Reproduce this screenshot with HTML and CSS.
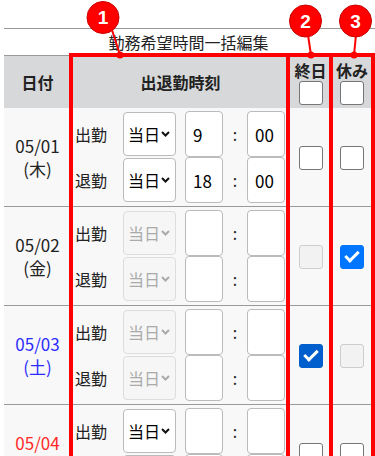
FILE: index.html
```html
<!DOCTYPE html>
<html lang="ja">
<head>
    <meta charset="UTF-8">
    <meta name="viewport" content="width=device-width, initial-scale=1.0">
    <title>勤務希望時間一括編集</title>
    <link rel="stylesheet" href="styles.css">
</head>
<body>
    <div class="sheet">
        <div class="caption">勤務希望時間一括編集</div>
        <table class="shift-table">
            <colgroup>
                <col class="w-date">
                <col class="w-time">
                <col class="w-allday">
                <col class="w-off">
            </colgroup>
            <thead>
                <tr>
                    <th>日付</th>
                    <th>出退勤時刻</th>
                    <th class="head-check">終日<input type="checkbox" class="check"></th>
                    <th class="head-check">休み<input type="checkbox" class="check"></th>
                </tr>
            </thead>
            <tbody>
                <tr>
                    <td class="date">05/01<br>(木)</td>
                    <td class="times">
                        <div class="time-row">
                            <span class="label">出勤</span>
                            <span class="select-wrap">
                                <select class="day-select"><option>当日</option></select>
                                <svg class="chevron" width="9" height="6" viewBox="0 0 9 6"><path d="M1 1l3.5 3.5L8 1"/></svg>
                            </span>
                            <input type="text" class="num" value="9">
                            <span class="colon">:</span>
                            <input type="text" class="num" value="00">
                        </div>
                        <div class="time-row">
                            <span class="label">退勤</span>
                            <span class="select-wrap">
                                <select class="day-select"><option>当日</option></select>
                                <svg class="chevron" width="9" height="6" viewBox="0 0 9 6"><path d="M1 1l3.5 3.5L8 1"/></svg>
                            </span>
                            <input type="text" class="num" value="18">
                            <span class="colon">:</span>
                            <input type="text" class="num" value="00">
                        </div>
                    </td>
                    <td class="cell-check"><input type="checkbox" class="check"></td>
                    <td class="cell-check"><input type="checkbox" class="check"></td>
                </tr>
                <tr>
                    <td class="date">05/02<br>(金)</td>
                    <td class="times">
                        <div class="time-row">
                            <span class="label">出勤</span>
                            <span class="select-wrap">
                                <select class="day-select" disabled><option>当日</option></select>
                                <svg class="chevron" width="9" height="6" viewBox="0 0 9 6"><path d="M1 1l3.5 3.5L8 1"/></svg>
                            </span>
                            <input type="text" class="num">
                            <span class="colon">:</span>
                            <input type="text" class="num">
                        </div>
                        <div class="time-row">
                            <span class="label">退勤</span>
                            <span class="select-wrap">
                                <select class="day-select" disabled><option>当日</option></select>
                                <svg class="chevron" width="9" height="6" viewBox="0 0 9 6"><path d="M1 1l3.5 3.5L8 1"/></svg>
                            </span>
                            <input type="text" class="num">
                            <span class="colon">:</span>
                            <input type="text" class="num">
                        </div>
                    </td>
                    <td class="cell-check"><input type="checkbox" class="check" disabled></td>
                    <td class="cell-check"><input type="checkbox" class="check" checked></td>
                </tr>
                <tr>
                    <td class="date sat">05/03<br>(土)</td>
                    <td class="times">
                        <div class="time-row">
                            <span class="label">出勤</span>
                            <span class="select-wrap">
                                <select class="day-select" disabled><option>当日</option></select>
                                <svg class="chevron" width="9" height="6" viewBox="0 0 9 6"><path d="M1 1l3.5 3.5L8 1"/></svg>
                            </span>
                            <input type="text" class="num">
                            <span class="colon">:</span>
                            <input type="text" class="num">
                        </div>
                        <div class="time-row">
                            <span class="label">退勤</span>
                            <span class="select-wrap">
                                <select class="day-select" disabled><option>当日</option></select>
                                <svg class="chevron" width="9" height="6" viewBox="0 0 9 6"><path d="M1 1l3.5 3.5L8 1"/></svg>
                            </span>
                            <input type="text" class="num">
                            <span class="colon">:</span>
                            <input type="text" class="num">
                        </div>
                    </td>
                    <td class="cell-check"><input type="checkbox" class="check dark" checked></td>
                    <td class="cell-check"><input type="checkbox" class="check" disabled></td>
                </tr>
                <tr>
                    <td class="date sun">05/04<br>(日)</td>
                    <td class="times">
                        <div class="time-row">
                            <span class="label">出勤</span>
                            <span class="select-wrap">
                                <select class="day-select"><option>当日</option></select>
                                <svg class="chevron" width="9" height="6" viewBox="0 0 9 6"><path d="M1 1l3.5 3.5L8 1"/></svg>
                            </span>
                            <input type="text" class="num">
                            <span class="colon">:</span>
                            <input type="text" class="num">
                        </div>
                        <div class="time-row">
                            <span class="label">退勤</span>
                            <span class="select-wrap">
                                <select class="day-select"><option>当日</option></select>
                                <svg class="chevron" width="9" height="6" viewBox="0 0 9 6"><path d="M1 1l3.5 3.5L8 1"/></svg>
                            </span>
                            <input type="text" class="num">
                            <span class="colon">:</span>
                            <input type="text" class="num">
                        </div>
                    </td>
                    <td class="cell-check"><input type="checkbox" class="check"></td>
                    <td class="cell-check"><input type="checkbox" class="check"></td>
                </tr>
            </tbody>
        </table>
    </div>

    <!-- annotation overlay -->
    <div class="frame frame-time"></div>
    <div class="frame frame-allday"></div>
    <div class="frame frame-off"></div>
    <svg class="callouts" width="375" height="70" viewBox="0 0 375 70">
        <g class="pointer">
            <line x1="112" y1="30" x2="120" y2="55"/>
            <circle cx="120" cy="55" r="3.5"/>
            <line x1="308" y1="35" x2="311" y2="55"/>
            <circle cx="311" cy="55" r="3.5"/>
            <line x1="356" y1="35" x2="354" y2="55"/>
            <circle cx="354" cy="55" r="3.5"/>
        </g>
        <g class="badge">
            <circle cx="103" cy="17.5" r="16"/>
            <circle cx="305.5" cy="21" r="16"/>
            <circle cx="355.5" cy="21" r="16"/>
        </g>
        <text x="103" y="24">1</text>
        <text x="305.5" y="27.5">2</text>
        <text x="355.5" y="27.5">3</text>
    </svg>
</body>
</html>
```

FILE: styles.css
```css
html, body {
    overflow: hidden;
}
body {
    margin: 0;
    position: relative;
    font-family: "Noto Sans CJK JP", "Noto Sans", sans-serif;
    color: #222;
    background-color: #fff;
}
.sheet {
    margin: 28px 0 0 4px;
    border-top: 1px solid #999;
}
.caption {
    height: 26px;
    line-height: 26px;
    width: 369px;
    text-align: center;
    font-size: 16px;
    color: #222;
}
.shift-table {
    border-collapse: separate;
    border-spacing: 0;
    table-layout: fixed;
    width: 369px;
    border-top: 1px solid #999;
}
.w-date { width: 67px; }
.w-time { width: 219px; }
.w-allday { width: 41px; }
.w-off { width: 42px; }
.shift-table th {
    height: 52px;
    padding: 0;
    background-color: #d6d8d9;
    font-size: 16px;
    font-weight: bold;
    color: #222;
    vertical-align: middle;
}
.shift-table th.head-check {
    padding: 4px 0 3px;
    height: 45px;
    line-height: 20px;
    vertical-align: top;
}
.head-check .check {
    display: block;
    margin: 1px auto 0;
}
.shift-table td {
    background-color: #f8f8f8;
    border-bottom: 1px solid #999;
    padding: 3px 0;
    vertical-align: middle;
}
.date {
    text-align: center;
    font-size: 17px;
    line-height: 23px;
    color: #222;
}
.date.sat {
    color: #2b2bff;
}
.date.sun {
    color: #ff2828;
}
.shift-table td.times {
    padding: 3px 0 3px 4px;
}
.time-row {
    display: flex;
    align-items: center;
    height: 46px;
}
.label {
    flex: none;
    width: 48px;
    font-size: 16px;
    color: #222;
}
.select-wrap {
    flex: none;
    position: relative;
    display: block;
    width: 53px;
    height: 44px;
    margin-right: 9px;
}
.day-select {
    appearance: none;
    -webkit-appearance: none;
    width: 53px;
    height: 44px;
    margin: 0;
    padding: 0 0 0 4px;
    border: 1px solid #bbb;
    border-radius: 4px;
    background-color: #fff;
    font-family: inherit;
    font-size: 16px;
    color: #000;
}
.day-select:disabled {
    background-color: #f6f6f6;
    border-color: #ddd;
    color: #aaa;
    opacity: 1;
}
.chevron {
    position: absolute;
    right: 6px;
    top: 19px;
    fill: none;
    stroke: #111;
    stroke-width: 2;
    pointer-events: none;
}
.day-select:disabled + .chevron {
    stroke: #aaa;
}
.num {
    flex: none;
    box-sizing: border-box;
    width: 38px;
    height: 46px;
    margin: 0;
    padding: 0 0 0 7px;
    border: 1px solid #bbb;
    border-radius: 4px;
    background-color: #fff;
    font-family: inherit;
    font-size: 17px;
    color: #000;
}
.colon {
    flex: none;
    width: 24px;
    text-align: center;
    font-size: 16px;
    color: #222;
}
.cell-check {
    text-align: center;
}
.check {
    appearance: none;
    -webkit-appearance: none;
    position: relative;
    box-sizing: border-box;
    width: 24px;
    height: 24px;
    margin: 0;
    border: 1px solid #767676;
    border-radius: 3px;
    background-color: #fff;
    vertical-align: middle;
}
.check:checked {
    background-color: #0075ff;
    border-color: #0075ff;
}
.check.dark:checked {
    background-color: #005fcc;
    border-color: #005fcc;
}
.check:checked::after {
    content: "";
    position: absolute;
    left: 7px;
    top: 2px;
    box-sizing: border-box;
    width: 8px;
    height: 14px;
    border: solid #fff;
    border-width: 0 3.5px 3.5px 0;
    transform: rotate(45deg);
}
.check:disabled {
    background-color: #f2f2f2;
    border-color: #cdcdcd;
}

/* red annotation frames */
.frame {
    position: absolute;
    top: 53px;
    height: 460px;
    box-sizing: border-box;
    border: 4px solid #ff0000;
}
.frame-time {
    left: 69px;
    width: 221px;
}
.frame-allday {
    left: 286px;
    width: 47px;
}
.frame-off {
    left: 329px;
    width: 46px;
}
.callouts {
    position: absolute;
    top: 0;
    left: 0;
}
.pointer line {
    stroke: #ff0000;
    stroke-width: 2;
}
.pointer circle {
    fill: #ff0000;
}
.badge circle {
    fill: #ff0000;
    stroke: #c80000;
    stroke-width: 1;
}
.callouts text {
    fill: #fff;
    font-family: "Liberation Sans", Arial, sans-serif;
    font-size: 19px;
    font-weight: bold;
    text-anchor: middle;
}
```
